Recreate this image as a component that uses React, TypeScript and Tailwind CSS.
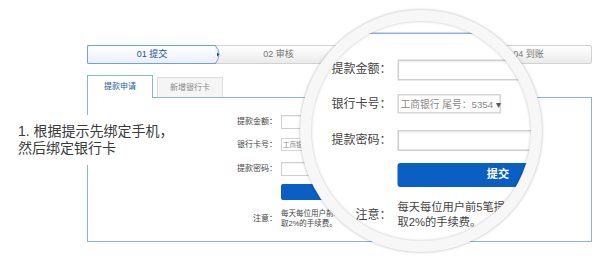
const FONT = "font-['Liberation_Sans','Noto_Sans_CJK_SC',sans-serif]";

function Stepper() {
  return (
    <div className="flex h-[19px] w-[505px] rounded-[2px] border border-[#d2d2d2] bg-linear-to-b from-white to-[#ebebeb]">
      <div className="relative z-10 -my-px -ml-px flex w-[129px] items-center justify-center rounded-l-[2px] border border-r-0 border-[#6fa2dc] bg-linear-to-b from-white to-[#e9eff7] text-[9px] text-[#1d4f99]">
        01 提交
        <svg
          className="absolute -right-[7px] -top-px"
          width="8"
          height="19"
          viewBox="0 0 8 19"
        >
          <path d="M0 0 Q8 9.5 0 19" fill="#f2f6fb" stroke="#6fa2dc" strokeWidth="1" />
          <path d="M2 7.5 L4.5 9.5 L2 11.5 Z" fill="#1d4f99" />
        </svg>
      </div>
      <div className="relative flex flex-1 items-center justify-center text-[9px] text-[#777]">
        02 审核
        <svg className="absolute -right-[4px] top-0" width="9" height="17" viewBox="0 0 9 17">
          <path d="M0 17 L9 0" stroke="#d2d2d2" strokeWidth="1" />
        </svg>
      </div>
      <div className="relative flex flex-1 items-center justify-center text-[9px] text-[#777]">
        03 处理
        <svg className="absolute -right-[4px] top-0" width="9" height="17" viewBox="0 0 9 17">
          <path d="M0 17 L9 0" stroke="#d2d2d2" strokeWidth="1" />
        </svg>
      </div>
      <div className="flex flex-1 items-center justify-center text-[9px] text-[#777]">04 到账</div>
    </div>
  );
}

function Tabs() {
  return (
    <div className="mt-[11px] flex h-[22px] items-end gap-[4px]">
      <div className="relative z-10 -mb-px flex h-[23px] w-[66px] items-center justify-center border border-b-0 border-[#87b3e6] bg-white text-[8px] text-[#1d5aa8]">
        提款申请
      </div>
      <div className="flex h-[20px] w-[66px] items-center justify-center border border-b-0 border-[#dcdcdc] bg-[#f5f5f5] text-[8px] text-[#888]">
        新增银行卡
      </div>
    </div>
  );
}

function Row({ label, mt, children }: { label: string; mt: string; children: React.ReactNode }) {
  return (
    <div className={`flex items-center ${mt}`}>
      <span className="w-[193px] shrink-0 pr-[4px] text-right text-[8px] text-[#444]">{label}</span>
      {children}
    </div>
  );
}

function Form() {
  return (
    <div className="flex h-[145px] w-[505px] flex-col border border-[#87b3e6] bg-white">
      <Row label="提款金额：" mt="mt-[17px]">
        <div className="h-[14px] w-[140px] border border-[#cfcfcf] bg-white shadow-[inset_0_1px_1px_rgba(0,0,0,0.06)]" />
      </Row>
      <Row label="银行卡号：" mt="mt-[9px]">
        <div className="flex h-[13px] w-[69px] items-center gap-[2px] whitespace-nowrap border border-[#d6d6d6] bg-white pl-px text-[6.5px] text-[#888]">
          <span>工商银行 尾号：5354</span>
          <span className="text-[#555]">▾</span>
        </div>
      </Row>
      <Row label="提款密码：" mt="mt-[11px]">
        <div className="h-[14px] w-[140px] border border-[#cfcfcf] bg-white shadow-[inset_0_1px_1px_rgba(0,0,0,0.06)]" />
      </Row>
      <div className="ml-[193px] mt-[8px] flex h-[16px] w-[134px] items-center justify-center rounded-[2px] bg-[#0b5ec2] text-[7.5px] font-bold text-white">
        提交
      </div>
      <Row label="注意：" mt="mt-[9px]">
        <div className="whitespace-nowrap text-[7.5px] leading-[10px] text-[#444]">
          每天每位用户前5笔提现免费，超过5笔收
          <br />
          取2%的手续费。
        </div>
      </Row>
    </div>
  );
}

// lens: the copy shown in the magnifier; the header part never shows there
function Scene({ lens = false }: { lens?: boolean }) {
  return (
    <div className={`flex h-[260px] w-[600px] flex-col bg-white pl-[87px] pt-[45px] ${FONT}`}>
      {lens ? <div className="h-[52px]" /> : (
        <>
          <Stepper />
          <Tabs />
        </>
      )}
      <Form />
    </div>
  );
}

export default function App() {
  return (
    <div className={`relative h-[260px] w-[600px] overflow-hidden bg-white ${FONT}`}>
      <Scene />

      <div className="absolute left-[14px] top-[115px] bg-white px-[4px] py-[8px] text-[14px] leading-[17px] text-[#3a3a3a]">
        1. 根据提示先绑定手机，
        <br />
        然后绑定银行卡
      </div>

      <div className="absolute left-[300px] top-[10px] h-[242px] w-[242px] rounded-full bg-[#f7f7f7] shadow-[0_0_3px_rgba(0,0,0,0.3)]">
        <div className="absolute left-[11px] top-[11px] h-[220px] w-[220px] overflow-hidden rounded-full bg-white">
          <div className="absolute left-[-335px] top-[-134px] origin-top-left scale-150">
            <Scene lens />
          </div>
        </div>
        <div className="pointer-events-none absolute left-[11px] top-[11px] h-[220px] w-[220px] rounded-full shadow-[inset_0_0_3px_rgba(0,0,0,0.25)]" />
      </div>
    </div>
  );
}
